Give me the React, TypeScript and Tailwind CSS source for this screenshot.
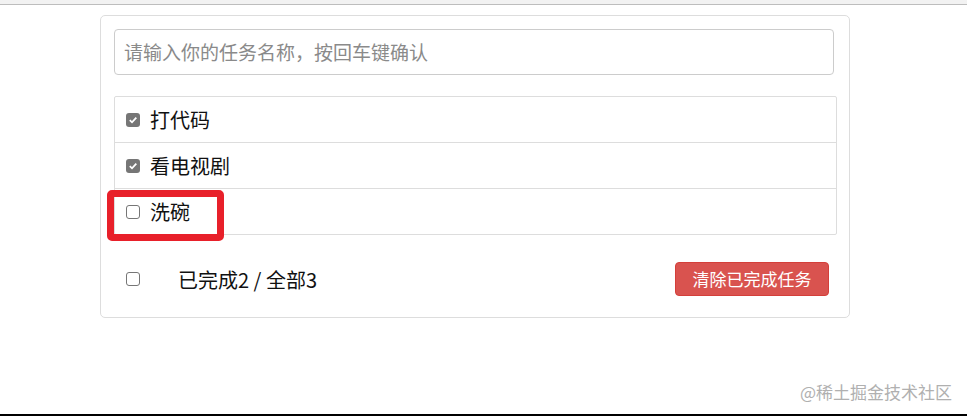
import React from 'react';

const font = { fontFamily: '"Noto Sans CJK SC", "Liberation Sans", sans-serif' };

function Box({ checked }: { checked: boolean }) {
  if (checked) {
    return (
      <span className="flex h-[14px] w-[14px] shrink-0 items-center justify-center rounded-[3px] bg-[#767676]">
        <svg width="10" height="10" viewBox="0 0 10 10">
          <path d="M1.8 5.2 L4 7.3 L8.3 2.6" fill="none" stroke="#fff" strokeWidth="1.8" />
        </svg>
      </span>
    );
  }
  return <span className="block h-[14px] w-[14px] shrink-0 rounded-[3px] border border-[#767676] bg-white" />;
}

const todos = [
  { name: '打代码', done: true },
  { name: '看电视剧', done: true },
  { name: '洗碗', done: false },
];

export default function App() {
  return (
    <div className="relative h-[416px] w-[967px] overflow-hidden bg-white" style={font}>
      <div className="h-[5px] border-b border-[#bdbdbd] bg-[#f2f2f2]" />
      <div className="ml-[100px] mt-[10px] w-[750px] rounded-[5px] border border-[#dddddd] px-[13px] pt-[13px] pb-[21px]">
        <div className="flex h-[46px] w-[720px] items-center rounded-[4px] border border-[#cccccc] px-[9px] text-[19px] text-[#8a8a8a]">
          请输入你的任务名称，按回车键确认
        </div>
        <ul className="mt-[21px] w-[723px] rounded-[2px] border border-[#dddddd]">
          {todos.map((t, i) => (
            <li
              key={t.name}
              className={`flex items-center gap-[10px] px-[11px] ${i > 0 ? 'h-[46px] border-t border-[#dddddd]' : 'h-[45px]'}`}
            >
              <Box checked={t.done} />
              <span className="text-[20px] text-[#111]">{t.name}</span>
            </li>
          ))}
        </ul>
        <div className="mt-[27px] flex h-[34px] items-center">
          <span className="ml-[12px]">
            <Box checked={false} />
          </span>
          <span className="ml-[38px] mt-[2px] text-[20px] text-[#111]">已完成2 / 全部3</span>
          <button className="ml-auto mr-[7px] h-[34px] w-[154px] rounded-[4px] border border-[#d43f3a] bg-[#d9534f] text-[17px] text-white">
            清除已完成任务
          </button>
        </div>
      </div>
      <div className="absolute left-[107px] top-[190px] h-[51px] w-[117px] rounded-[5px] border-[7px] border-[#e8202a]" />
      <div className="absolute right-[15px] top-[379px] text-[17px] text-[#b0b0b0]">@稀土掘金技术社区</div>
      <div className="absolute bottom-0 left-0 h-[2px] w-full bg-black" />
    </div>
  );
}
